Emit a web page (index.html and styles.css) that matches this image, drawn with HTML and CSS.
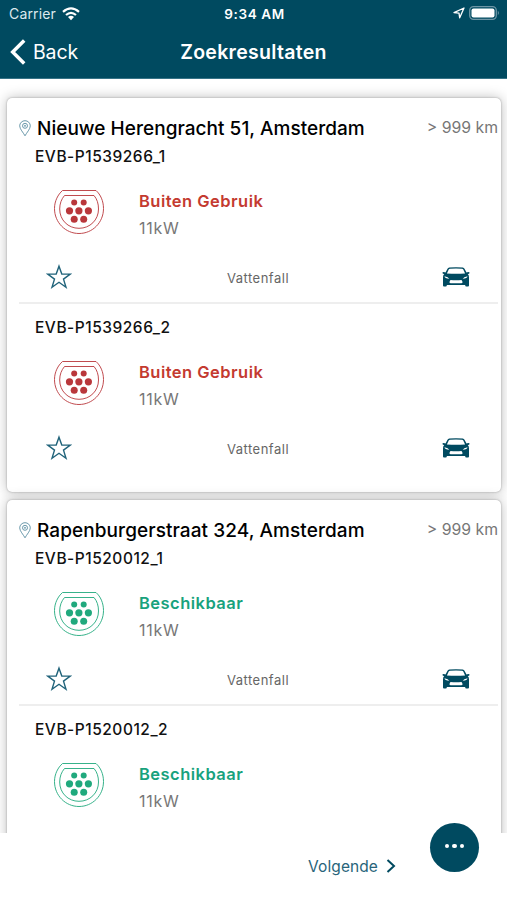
FILE: index.html
```html
<!DOCTYPE html>
<html lang="nl">
<head>
<meta charset="utf-8">
<title>Zoekresultaten</title>
<link rel="stylesheet" href="styles.css">
</head>
<body>
<svg class="defs" width="0" height="0" aria-hidden="true">
  <symbol id="pin" viewBox="0 0 12 17">
    <path d="M6 15.8C4.3 12.6.7 9 .7 5.9a5.3 5.2 0 0 1 10.6 0C11.3 9 7.700 12.600 6 15.800Z"/>
    <circle cx="6" cy="5.800" r="2.500"/><circle cx="6" cy="5.800" r=".6"/>
  </symbol>
  <symbol id="plug" viewBox="0 0 52 46">
    <g fill="none" stroke="currentColor" stroke-width=".9">
      <path d="M9.500 1.500H43C47.500 5.500 50.500 12 50.500 19.500C50.500 33.500 39.500 44.500 26 44.500S1.500 33.500 1.500 19.500C1.500 12 5 5.500 9.500 1.500Z"/>
      <path d="M11.500 6.500H41C44 10 45.500 14.500 45.500 20C45.500 31 37 39.300 26 39.300S6.700 31 6.700 20C6.700 14.500 8.500 10 11.500 6.500Z"/>
    </g>
    <g fill="currentColor">
      <circle cx="21.200" cy="13.600" r="3"/><circle cx="30.700" cy="13.600" r="3"/>
      <circle cx="16.500" cy="21.800" r="3.600"/><circle cx="25.900" cy="21.800" r="3.600"/><circle cx="35.400" cy="21.800" r="3.600"/>
      <circle cx="21.200" cy="30.300" r="3.500"/><circle cx="30.700" cy="30.300" r="3.500"/>
    </g>
  </symbol>
  <symbol id="star" viewBox="0 0 26 26">
    <path fill="none" stroke="currentColor" stroke-width="1.400" d="M13 2.200 15.800 10.100H24.300L17.500 15.100 20 23.200 13 18.300 6 23.200 8.500 15.100 1.700 10.100H10.200Z"/>
  </symbol>
  <symbol id="car" viewBox="0 0 28 20">
    <path fill="currentColor" fill-rule="evenodd" d="M.5 5.200Q2.400 4.700 3.500 5.500L5.500 1.700Q6 .8 7.200.6Q14-.3 20.800.6Q22 .8 22.500 1.700L24.500 5.500Q25.600 4.700 27.500 5.200L27.200 6.700 25.700 7.100Q27 8.200 27 10.200V18.400Q27 19.500 26 19.500H24.300Q23.200 19.500 23.200 18.400V18H4.800V18.400Q4.800 19.500 3.700 19.500H2Q1 19.500 1 18.400V10.200Q1 8.200 2.300 7.100L.8 6.700ZM4.900 6.400Q14 7.200 23.100 6.400L21.300 2.500Q20.900 1.800 20 1.700Q14 1.200 8 1.700Q7.100 1.800 6.700 2.500ZM2.500 9.200Q2.700 11.400 7.300 11.700Q6.300 9.900 2.500 9.200ZM25.500 9.200Q21.700 9.900 20.700 11.700Q25.300 11.400 25.500 9.200ZM8.500 13Q6.300 16.300 8.800 16.300H19.200Q21.700 16.300 19.500 13Q14 13.700 8.500 13Z"/>
  </symbol>
</svg>

<header class="top">
  <div class="statusbar">
    <div class="carrier"><span>Carrier</span>
      <svg width="18" height="14" viewBox="0 0 18 14" fill="none" stroke="#fff" stroke-width="2.200"><path d="M1 4.900Q9-2 17 4.900M4 8Q9 3.600 14 8"/><path fill="#fff" stroke="none" d="M6 10Q9 7.600 12 10L9 13.300Z"/></svg>
    </div>
    <div class="time">9:34 AM</div>
    <div class="indicators">
      <svg width="12" height="12" viewBox="0 0 12 12" fill="none" stroke="#fff" stroke-width="1.300" stroke-linejoin="round"><path d="M11 1 6.700 10.800 6 6.100 1 5.600Z"/></svg>
      <svg width="31" height="14" viewBox="0 0 31 14"><rect x=".7" y=".7" width="26.600" height="12.600" rx="3.800" fill="none" stroke="#6d95a5" stroke-width="1.300"/><rect x="2.500" y="2.500" width="23" height="9" rx="2" fill="#fff"/><path d="M28.800 4.800Q31 7 28.800 9.200Z" fill="#6d95a5"/></svg>
    </div>
  </div>
  <nav class="navbar">
    <div class="back"><svg width="16" height="26" viewBox="0 0 16 26" fill="none" stroke="#fff" stroke-width="3.500"><path d="M14.200 1.500 2.700 13 14.200 24.500"/></svg><span>Back</span></div>
    <h1>Zoekresultaten</h1>
    <div></div>
  </nav>
</header>

<main class="results">
  <section class="card">
    <div class="card-head">
      <svg class="pin"><use href="#pin"/></svg><h2>Nieuwe Herengracht 51, Amsterdam</h2><span class="distance">&gt; 999 km</span>
    </div>
    <article class="station out">
      <h3>EVB-P1539266_1</h3>
      <div class="info"><svg class="plug"><use href="#plug"/></svg><div><div class="state">Buiten Gebruik</div><div class="power">11kW</div></div></div>
      <div class="foot"><svg class="star"><use href="#star"/></svg><span>Vattenfall</span><svg class="car"><use href="#car"/></svg></div>
    </article>
    <article class="station out">
      <h3>EVB-P1539266_2</h3>
      <div class="info"><svg class="plug"><use href="#plug"/></svg><div><div class="state">Buiten Gebruik</div><div class="power">11kW</div></div></div>
      <div class="foot"><svg class="star"><use href="#star"/></svg><span>Vattenfall</span><svg class="car"><use href="#car"/></svg></div>
    </article>
  </section>
  <section class="card">
    <div class="card-head">
      <svg class="pin"><use href="#pin"/></svg><h2 class="long">Rapenburgerstraat 324, Amsterdam</h2><span class="distance">&gt; 999 km</span>
    </div>
    <article class="station free">
      <h3>EVB-P1520012_1</h3>
      <div class="info"><svg class="plug"><use href="#plug"/></svg><div><div class="state">Beschikbaar</div><div class="power">11kW</div></div></div>
      <div class="foot"><svg class="star"><use href="#star"/></svg><span>Vattenfall</span><svg class="car"><use href="#car"/></svg></div>
    </article>
    <article class="station free">
      <h3>EVB-P1520012_2</h3>
      <div class="info"><svg class="plug"><use href="#plug"/></svg><div><div class="state">Beschikbaar</div><div class="power">11kW</div></div></div>
    </article>
  </section>
</main>

<footer class="pager">
  <div class="next"><span>Volgende</span><svg width="10" height="14" viewBox="0 0 10 14" fill="none" stroke="#004a60" stroke-width="2"><path d="M1.500 1 8 7 1.500 13"/></svg></div>
</footer>
<button class="fab" aria-label="Menu"><i></i><i></i><i></i></button>
</body>
</html>
```

FILE: styles.css
```css
* { box-sizing: border-box; }
body {
  margin: 0;
  height: 900px;
  overflow: hidden;
  display: flex;
  flex-direction: column;
  position: relative;
  background: #fff;
  color: #111;
  font-family: Inter, "Liberation Sans", sans-serif;
}
h1, h2, h3 { margin: 0; font-weight: 500; white-space: nowrap; }
svg { display: block; flex: none; }
.defs { position: absolute; }

.top { height: 79px; flex: none; background: #004a60; color: #fff; border-bottom: 1px solid #367387; }
.statusbar, .navbar { display: grid; grid-template-columns: 1fr auto 1fr; align-items: center; }
.statusbar { height: 28px; padding: 0 7px 0 9px; font-size: 14px; }
.carrier { display: flex; align-items: center; gap: 6px; color: #dce9ee; letter-spacing: .15px; }
.carrier svg { margin-top: -1px; }
.carrier span { margin-top: -1px; }
.time { font-weight: 600; font-size: 13.5px; letter-spacing: .6px; }
.indicators { display: flex; justify-content: flex-end; align-items: center; gap: 5px; margin-top: -2px; }
.indicators svg:first-child { margin-right: -1px; }
.navbar { height: 48px; padding: 0 10px; }
.back { display: flex; align-items: center; gap: 7px; font-size: 19.5px; letter-spacing: -.15px; }
.navbar h1 { font-size: 19.5px; font-weight: 600; letter-spacing: .3px; }

.results { height: 754px; flex: none; overflow: hidden; padding: 19px 6px 0 7px; background: #fff; }
.card {
  height: 394px;
  margin-bottom: 8px;
  background: #fff;
  border-radius: 5px;
  box-shadow: 0 0 2px #999, 0 0 13px #bbb;
}
.card-head { height: 48px; padding: 13px 3px 0 12px; display: flex; align-items: flex-start; }
.pin { width: 12px; height: 17px; margin-top: 9px; fill: none; stroke: #5b8ea3; stroke-width: .9; }
h2 { margin-left: 6px; font-size: 19px; line-height: 35px; letter-spacing: .03px; color: #000; }
h2.long { letter-spacing: .08px; }
.distance { margin-left: auto; font-size: 15.8px; line-height: 33px; color: #777; white-space: nowrap; }

.station { height: 156px; margin-left: 12px; margin-right: 3px; }
.station + .station { height: 171px; padding-top: 13px; border-top: 2px solid #eee; }
h3 { margin-left: 16px; height: 22px; line-height: 22px; font-size: 15.5px; letter-spacing: .52px; }
.info { display: flex; margin-top: 21px; padding-left: 34px; height: 46px; gap: 34px; }
.plug { width: 52px; height: 46px; }
.out .plug { color: #b9373b; }
.free .plug { color: #20a97d; }
.state { font-size: 16.5px; font-weight: 600; line-height: 26px; letter-spacing: .47px; margin-top: -1px; white-space: nowrap; }
.out .state { color: #c43a30; }
.free .state { color: #18a27d; }
.power { font-size: 16px; line-height: 28px; letter-spacing: .7px; color: #777; }
.foot { display: grid; grid-template-columns: 1fr auto 1fr; align-items: center; height: 26px; margin-top: 29px; padding: 0 28px 0 27px; }
.foot span { font-size: 13px; letter-spacing: .5px; color: #666; margin-top: 2px; }
.star { width: 26px; height: 26px; color: #20637a; }
.car { width: 28px; height: 20px; justify-self: end; color: #004a60; }

.pager { flex: 1; display: flex; justify-content: flex-end; padding: 23px 111px 0 0; }
.next { display: flex; align-items: center; height: 20px; gap: 8px; font-size: 15.5px; letter-spacing: .1px; color: #28647a; }
.fab {
  position: absolute;
  left: 430px;
  top: 823px;
  width: 49px;
  height: 49px;
  border: 0;
  border-radius: 50%;
  padding: 0 0 3px;
  background: #004a60;
  display: flex;
  align-items: center;
  justify-content: center;
  gap: 3px;
}
.fab i { width: 4.500px; height: 4.500px; border-radius: 50%; background: #fff; }
```
